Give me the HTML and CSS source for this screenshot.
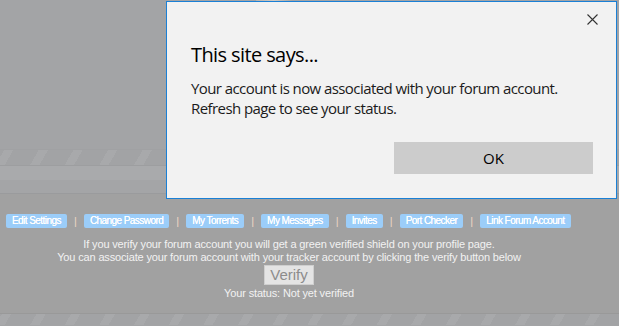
FILE: index.html
```html
<!DOCTYPE html>
<html lang="en">
<head>
  <meta charset="UTF-8" />
  <title>My Profile</title>
  <link rel="stylesheet" href="styles.css">
</head>
<body>
  <div class="page">
    <div class="header">
      <div class="logo-peek"></div>
    </div>
    <div class="stripes"></div>
    <div class="bar-light"></div>
    <div class="bar"></div>

    <div class="content">
      <div class="nav">
        <a class="nav-btn" href="#">Edit Settings</a>
        <span class="sep">|</span>
        <a class="nav-btn" href="#">Change Password</a>
        <span class="sep">|</span>
        <a class="nav-btn" href="#">My Torrents</a>
        <span class="sep">|</span>
        <a class="nav-btn" href="#">My Messages</a>
        <span class="sep">|</span>
        <a class="nav-btn" href="#">Invites</a>
        <span class="sep">|</span>
        <a class="nav-btn" href="#">Port Checker</a>
        <span class="sep">|</span>
        <a class="nav-btn" href="#">Link Forum Account</a>
      </div>

      <div class="verify-box">
        <p>If you verify your forum account you will get a green verified shield on your profile page.</p>
        <p>You can associate your forum account with your tracker account by clicking the verify button below</p>
        <button class="verify-btn">Verify</button>
        <p>Your status: Not yet verified</p>
      </div>
    </div>

    <div class="stripes bottom"></div>
  </div>

  <!-- browser alert on top of the dimmed page -->
  <div class="dialog">
    <svg class="close" width="11" height="11" viewBox="0 0 11 11">
      <path d="M0.5 0.5 L10.5 10.5 M10.5 0.5 L0.5 10.5" stroke="#333" stroke-width="1.1" fill="none"/>
    </svg>
    <h1>This site says...</h1>
    <p class="msg">Your account is now associated with your forum account.<br>Refresh page to see your status.</p>
    <div class="actions">
      <button class="ok">OK</button>
    </div>
  </div>
</body>
</html>
```

FILE: styles.css
```css
body {
  margin: 0;
  padding: 0;
  background: #a3a4a6;
  font-family: 'Liberation Sans', Arial, sans-serif;
  overflow: hidden;
}

.page {
  width: 619px;
  height: 326px;
}

.header {
  height: 150px;
  border-bottom: 1px solid #a0a1a3;
  box-sizing: border-box;
}

.logo-peek {
  margin-left: 256px;
  width: 36px;
  height: 2px;
  background: linear-gradient(90deg, #b9b4ae, #cfcac4, #a7a5a3);
}

.stripes {
  height: 15px;
  background: repeating-linear-gradient(-60deg, #a2a3a5 0, #a2a3a5 22px, #a8a9ab 22px, #a8a9ab 30px);
  border-bottom: 1px solid #9d9ea0;
}

.bar-light {
  height: 14px;
  background: #a9aaac;
}

.bar {
  height: 13px;
  background: #a4a5a7;
  border-bottom: 1px solid #9a9b9d;
}

.content {
  background: #a1a1a1;
  height: 120px;
  padding-top: 20px;
  box-sizing: border-box;
  border-bottom: 1px solid #999;
}

.nav {
  display: flex;
  align-items: center;
  padding-left: 6px;
  height: 14px;
}

.nav-btn {
  display: block;
  background: #9bcdf9;
  color: #fff;
  font-size: 10px;
  letter-spacing: -0.56px;
  line-height: 14px;
  height: 14px;
  padding: 0 6px;
  border-radius: 2px;
  text-decoration: none;
  text-shadow: 0 0 0.5px #fff;
}

.sep {
  color: #ecd6c4;
  font-size: 11px;
  width: 17px;
  text-align: center;
}

.verify-box {
  width: 578px;
  text-align: center;
  color: #f2f2f2;
  font-size: 11px;
  letter-spacing: -0.15px;
  line-height: 13px;
  padding-top: 10px;
}

.verify-box p {
  margin: 0;
}

.verify-btn {
  display: block;
  margin: 1px auto 2px;
  width: 50px;
  height: 20px;
  padding: 0;
  background: #e4e4e4;
  border: 1px solid #cfcfcf;
  color: #8c8c8c;
  font-family: 'Liberation Sans', Arial, sans-serif;
  font-size: 15px;
  line-height: 18px;
}

.stripes.bottom {
  height: 11px;
  border-bottom: none;
}

.dialog {
  position: absolute;
  left: 166px;
  top: 1px;
  width: 451px;
  height: 198px;
  box-sizing: border-box;
  background: #f2f2f2;
  border: 1px solid #1a80d6;
  font-family: 'Open Sans', 'Noto Sans', sans-serif;
  padding: 0 23px 0 24px;
}

.close {
  position: absolute;
  top: 12px;
  right: 18px;
}

.dialog h1 {
  margin: 39px 0 0;
  font-size: 20px;
  font-weight: normal;
  line-height: 28px;
  color: #000;
  letter-spacing: -0.6px;
}

.msg {
  margin: 9px 0 0;
  font-size: 15px;
  line-height: 20px;
  color: #1b1b1b;
  letter-spacing: -0.58px;
}

.actions {
  display: flex;
  justify-content: flex-end;
  margin-top: 24px;
}

.ok {
  width: 199px;
  height: 32px;
  background: #cccccc;
  border: none;
  font-family: 'Open Sans', 'Noto Sans', sans-serif;
  font-size: 15px;
  color: #000;
}
```
